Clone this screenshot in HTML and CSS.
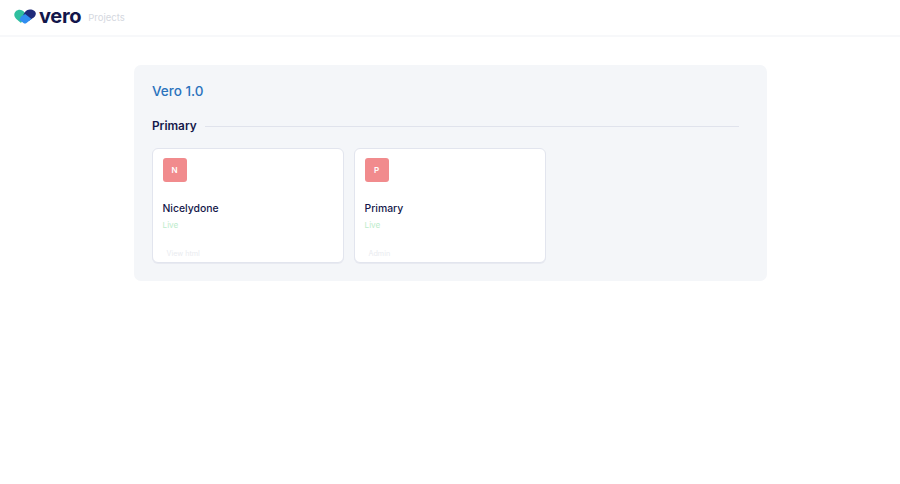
FILE: index.html
```html
<!DOCTYPE html>
<html lang="en">
<head>
<meta charset="utf-8">
<title>Vero Projects</title>
<link rel="stylesheet" href="styles.css">
</head>
<body>
<header class="topbar">
  <svg class="logo-mark" width="22" height="15" viewBox="0 0 22 15" aria-hidden="true">
    <path fill="#2fbf9f" d="M5.800 .8C2.700 .8 .3 3 .3 5.800c0 1.700.8 3 2 4.100L7 14l4.500-8C10.800 3 8.700 .8 5.800 .8z"/>
    <path fill="#1f2a7a" d="M16 .6c-2.300 0-4.100 1.100-5.400 2.900L8.500 7.500l6.500 4.300 5-3.500c1.200-1 1.800-2.300 1.800-3.700C21.800 2.300 19.200 .6 16 .6z"/>
    <path fill="#2f8df0" d="M7 7.500 11.200 5l6.300 5-5 4c-.9.800-2.100.8-3 .1L5.500 11z"/>
  </svg>
  <span class="brand">vero</span>
  <span class="section">Projects</span>
</header>
<main class="content">
  <section class="panel">
    <h1 class="panel-title">Vero 1.0</h1>
    <div class="group-head">
      <h2 class="group-name">Primary</h2>
      <div class="group-rule"></div>
    </div>
    <div class="cards">
      <article class="card">
        <div class="avatar">N</div>
        <h3 class="card-name">Nicelydone</h3>
        <div class="status">Live</div>
        <div class="card-action">View html</div>
      </article>
      <article class="card">
        <div class="avatar">P</div>
        <h3 class="card-name">Primary</h3>
        <div class="status">Live</div>
        <div class="card-action">Admin</div>
      </article>
    </div>
  </section>
</main>
</body>
</html>
```
FILE: styles.css
```css
* { box-sizing: border-box; }
html, body { margin: 0; height: 100%; background: #fff; }
body { font-family: Inter, "Liberation Sans", sans-serif; overflow: hidden; }

.topbar {
  height: 37px;
  display: flex;
  align-items: center;
  padding: 0 0 2px 14px;
  border-bottom: 2px solid #f7f8fa;
}
.logo-mark { display: block; flex: none; }
.brand {
  margin-left: 3px;
  font-size: 20px;
  font-weight: 700;
  letter-spacing: -0.3px;
  color: #12164a;
  line-height: 20px;
  position: relative;
  top: -1px;
}
.section {
  margin-left: 7px;
  font-size: 9.5px;
  line-height: 14px;
  padding-top: 2px;
  color: #d5d8e0;
}

.content { padding-top: 28px; display: flex; justify-content: center; }
.panel {
  width: 633px;
  height: 216px;
  padding: 17px 28px 0 18.5px;
  background: #f4f6f9;
  border-radius: 7px;
}
.panel-title {
  margin: 0;
  font-size: 13.5px;
  line-height: 18px;
  font-weight: 500;
  color: #2b73bd;
}
.group-head {
  margin-top: 17px;
  height: 18px;
  display: flex;
  align-items: center;
  gap: 8px;
}
.group-name {
  margin: 0;
  font-size: 11.8px;
  font-weight: 600;
  color: #14184a;
}
.group-rule { flex: 1; height: 1px; background: #e0e3ec; }

.cards { margin-top: 13px; display: flex; gap: 10px; }
.card {
  width: 192px;
  height: 115px;
  padding: 9px 9.5px 0;
  background: #fff;
  border: 1px solid #e2e5ee;
  border-radius: 6px;
  box-shadow: 0 1px 0 #e8eaf1;
}
.avatar {
  width: 24px;
  height: 24px;
  display: flex;
  align-items: center;
  justify-content: center;
  background: #f18b8d;
  border-radius: 3px;
  font-size: 8px;
  font-weight: 600;
  color: #fff;
}
.card-name {
  margin: 19px 0 0;
  font-size: 10.4px;
  line-height: 16px;
  font-weight: 500;
  color: #14184a;
}
.status {
  margin-top: 0;
  font-size: 8.2px;
  line-height: 16px;
  color: #bdeccb;
}
.card-action {
  margin: 15px 0 0 4px;
  font-size: 7.2px;
  line-height: 12px;
  color: #e9ebef;
}
```
